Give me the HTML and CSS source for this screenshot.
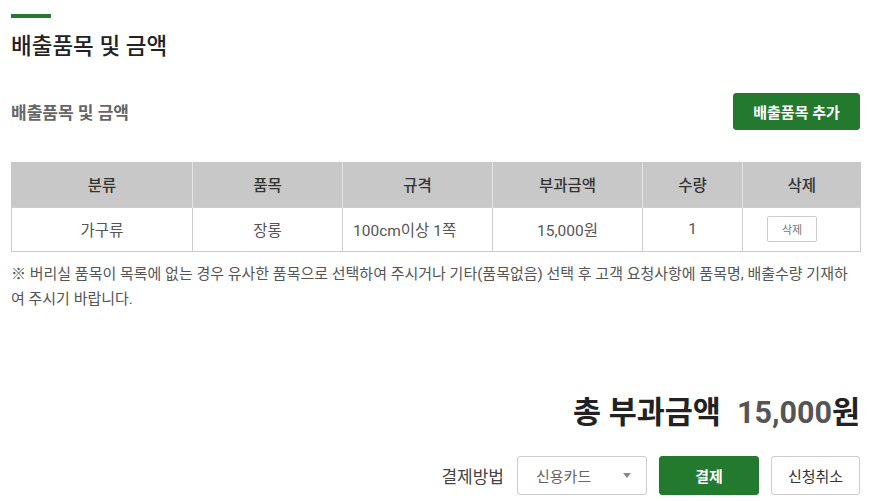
FILE: index.html
```html
<html>
<head>
	<meta charset="utf-8">
	<title>배출품목 및 금액</title>
	<link rel="stylesheet" href="styles.css">
</head>

<body>

<div class="page">
	<div class="title-bar"></div>
	<h2 class="page-title">배출품목 및 금액</h2>

	<div class="section-head">
		<h3>배출품목 및 금액</h3>
		<button class="btn btn-green btn-add">배출품목 추가</button>
	</div>

	<table class="item-table">
		<colgroup>
			<col style="width: 181px">
			<col style="width: 150px">
			<col style="width: 150px">
			<col style="width: 150px">
			<col style="width: 100px">
			<col style="width: 118px">
		</colgroup>
		<thead>
			<tr>
				<th>분류</th>
				<th>품목</th>
				<th>규격</th>
				<th>부과금액</th>
				<th>수량</th>
				<th>삭제</th>
			</tr>
		</thead>
		<tbody>
			<tr>
				<td>가구류</td>
				<td>장롱</td>
				<td class="left">100cm이상 1쪽</td>
				<td>15,000원</td>
				<td>1</td>
				<td class="del-cell"><button class="btn-del">삭제</button></td>
			</tr>
		</tbody>
	</table>

	<p class="note">※ 버리실 품목이 목록에 없는 경우 유사한 품목으로 선택하여 주시거나 기타(품목없음) 선택 후 고객 요청사항에 품목명, 배출수량 기재하여 주시기 바랍니다.</p>

	<div class="total">
		<span class="total-label">총 부과금액</span>
		<span class="total-value"><span class="num">15,000</span>원</span>
	</div>

	<div class="pay-row">
		<span class="pay-label">결제방법</span>
		<div class="select">
			<span>신용카드</span>
			<span class="caret"></span>
		</div>
		<button class="btn btn-green btn-pay">결제</button>
		<button class="btn btn-white btn-cancel">신청취소</button>
	</div>
</div>

</body>

</html>
```

FILE: styles.css
```css
body {
	font-family: Roboto, 'Noto Sans CJK KR', sans-serif;
	margin: 0;
	padding: 0;
	color: #333;
	background: #fff;
}

.page {
	padding: 14px 19px 0 11px;
}

.title-bar {
	width: 40px;
	height: 4px;
	background-color: #237a2f;
}

.page-title {
	margin: 12px 0 0 0;
	font-size: 22.5px;
	line-height: 32px;
	font-weight: 500;
	color: #222;
}

.section-head {
	display: flex;
	justify-content: space-between;
	align-items: center;
	margin-top: 31px;
}

.section-head h3 {
	margin: 0;
	font-size: 17px;
	font-weight: 700;
	color: #666;
}

.btn {
	font-family: Roboto, 'Noto Sans CJK KR', sans-serif;
	font-size: 15px;
	border-radius: 3px;
	cursor: pointer;
	padding: 0;
}

.btn-green {
	background-color: #237a2f;
	border: 1px solid #237a2f;
	color: #fff;
	font-weight: 700;
}

.btn-white {
	background-color: #fff;
	border: 1px solid #ccc;
	color: #333;
}

.btn-add {
	width: 127px;
	height: 37px;
}

.item-table {
	margin-top: 32px;
	width: 849px;
	border-collapse: collapse;
	table-layout: fixed;
	font-size: 15.5px;
}

.item-table th {
	height: 45px;
	background-color: #c8c8c8;
	border-left: 1px solid #e4e4e4;
	font-weight: 500;
	color: #333;
	padding: 0;
}

.item-table th:first-child {
	border-left: 1px solid #c8c8c8;
}

.item-table td {
	height: 44px;
	border: 1px solid #ccc;
	text-align: center;
	color: #555;
	padding: 0;
}

.item-table td.left {
	text-align: left;
	padding-left: 10px;
}

.item-table td.del-cell {
	text-align: left;
	padding-left: 24px;
}

.btn-del {
	width: 50px;
	height: 26px;
	background: #fff;
	border: 1px solid #ccc;
	border-radius: 2px;
	font-family: Roboto, 'Noto Sans CJK KR', sans-serif;
	font-size: 11px;
	color: #777;
	padding: 0;
	vertical-align: middle;
}

.note {
	margin: 10px 0 0 0;
	font-size: 15px;
	line-height: 25px;
	color: #555;
}

.total {
	display: flex;
	justify-content: flex-end;
	align-items: center;
	gap: 16px;
	margin-top: 81px;
	font-size: 30.5px;
	line-height: 40px;
	font-weight: 700;
	color: #222;
}

.total-value .num {
	color: #555;
}

.pay-row {
	display: flex;
	justify-content: flex-end;
	align-items: center;
	margin-top: 23px;
}

.pay-label {
	font-size: 17px;
	color: #444;
	margin-right: 13px;
}

.select {
	display: flex;
	justify-content: space-between;
	align-items: center;
	box-sizing: border-box;
	width: 130px;
	height: 39px;
	padding: 0 15px 0 18px;
	border: 1px solid #ccc;
	border-radius: 3px;
	font-size: 15px;
	color: #666;
}

.caret {
	width: 0;
	height: 0;
	border-left: 4px solid transparent;
	border-right: 4px solid transparent;
	border-top: 5px solid #888;
}

.btn-pay {
	width: 100px;
	height: 39px;
	margin-left: 12px;
}

.btn-cancel {
	width: 89px;
	height: 39px;
	margin-left: 12px;
}
```
